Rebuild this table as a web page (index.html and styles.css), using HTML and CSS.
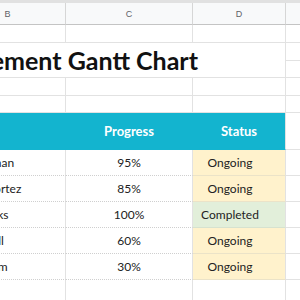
FILE: index.html
```html
<!DOCTYPE html>
<html>
<head>
<meta charset="utf-8">
<link rel="stylesheet" href="styles.css">
</head>
<body>
<div class="topbar"></div>
<div class="grid">
  <div class="ch">B</div><div class="ch">C</div><div class="ch">D</div><div class="ch"></div>

  <div class="c"></div><div class="c"></div><div class="c"></div><div class="c"></div>

  <div class="title"><span>Project Management Gantt Chart</span></div>
  <div class="c split"><div class="half"></div><div class="half last"></div></div>

  <div class="c"></div><div class="c"></div><div class="c"></div><div class="c"></div>
  <div class="c"></div><div class="c"></div><div class="c"></div><div class="c"></div>

  <div class="th"></div><div class="th">Progress</div><div class="th end">Status</div><div class="c"></div>

  <div class="name">Dylan Chan</div><div class="pct">95%</div><div class="status ongoing">Ongoing</div><div class="c"></div>
  <div class="name">Maria Cortez</div><div class="pct">85%</div><div class="status ongoing">Ongoing</div><div class="c"></div>
  <div class="name">Ian Brooks</div><div class="pct">100%</div><div class="status done">Completed</div><div class="c"></div>
  <div class="name">Mary Hall</div><div class="pct">60%</div><div class="status ongoing">Ongoing</div><div class="c"></div>
  <div class="name">Grace Kim</div><div class="pct">30%</div><div class="status ongoing">Ongoing</div><div class="c"></div>

  <div class="c open"></div><div class="c open"></div><div class="c open"></div><div class="c open"></div>
</div>
</body>
</html>
```

FILE: styles.css
```css
* { box-sizing: border-box; margin: 0; padding: 0; }
html, body { width: 300px; height: 300px; overflow: hidden; background: #fff; }
body { font-family: Lato, "Open Sans", sans-serif; color: #222; }

.topbar { height: 3px; background: #e1e1e1; }

.grid {
  display: grid;
  grid-template-columns: 116px 127px 93px 64px;
  grid-template-rows: 22px 18px 35px 18px 17px 37px repeat(5, 26px) 30px;
  margin-left: -50px;
  width: 400px;
}
.grid > div {
  border-right: 1px solid #e2e2e2;
  border-bottom: 1px solid #e2e2e2;
}

.grid > .ch {
  background: #f8f9fa;
  border-right-color: #d6d6d6;
  border-bottom-color: #c4c4c4;
  color: #5f6368;
  font-family: "Liberation Sans", Arial, sans-serif;
  font-size: 9px;
  display: flex;
  align-items: center;
  justify-content: center;
}

.grid > .title {
  grid-column: span 3;
  display: flex;
  align-items: center;
  justify-content: flex-end;
  padding-right: 87px;
  font-size: 25px;
  font-weight: 700;
  color: #111;
  white-space: nowrap;
}

.grid > .split { display: flex; flex-direction: column; border-bottom: 1px solid #e2e2e2; }
.half { height: 18px; border-bottom: 1px solid #e2e2e2; }
.half.last { flex: 1; border-bottom: none; }

.grid > .th {
  background: #13b4cf;
  border-color: #13b4cf;
  color: #fff;
  font-weight: 700;
  font-size: 13px;
  display: flex;
  align-items: center;
  justify-content: center;
}
.grid > .th.end { border-right-color: #e2e2e2; }

.grid > .name, .grid > .pct {
  font-size: 12px;
  display: flex;
  align-items: center;
  border-bottom: 1px dotted #cfcfcf;
  white-space: nowrap;
}
.grid > .name { padding-left: 3px; }
.grid > .pct { justify-content: center; }

.grid > .status {
  font-size: 12px;
  display: flex;
  align-items: center;
  justify-content: center;
  padding-right: 18px;
}
.grid > .ongoing { background: #fff2cc; border-bottom-color: #ebe3c8; }
.grid > .done { background: #e2efda; border-bottom-color: #d6e2cf; }

.grid > .open { border-bottom: none; }
```
